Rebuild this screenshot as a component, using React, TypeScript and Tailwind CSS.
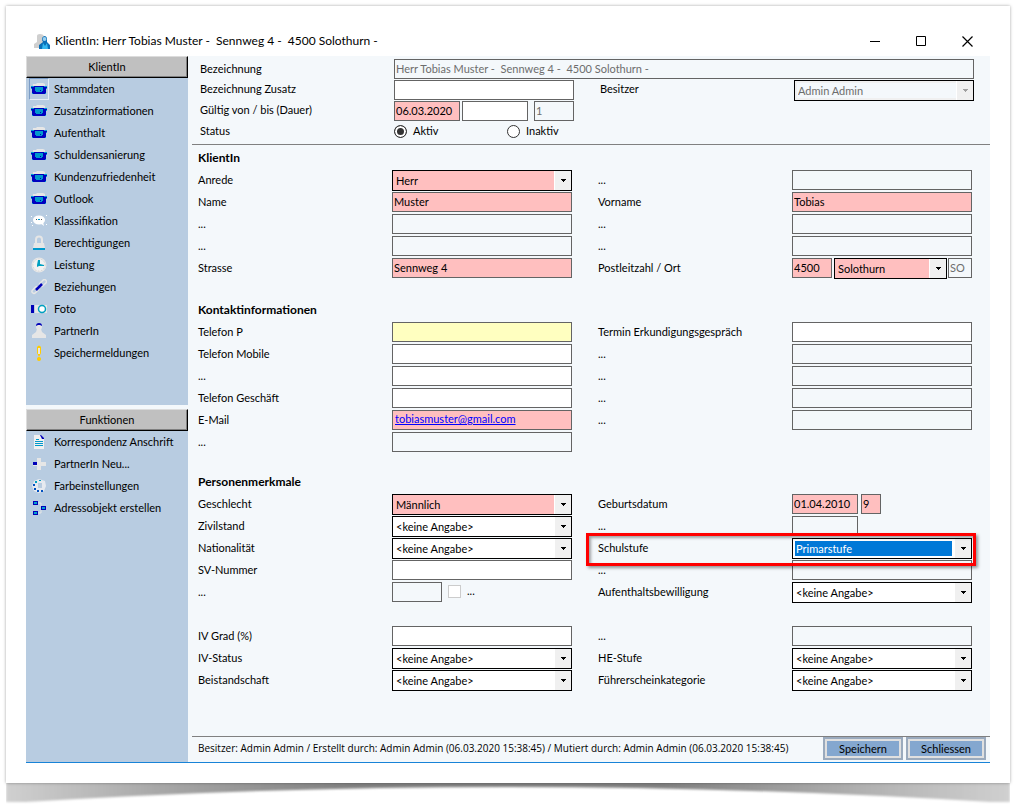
import { useId, useState } from 'react';
import type { ReactNode } from 'react';
import clsx from 'clsx';

type Tone = 'white' | 'required' | 'hint' | 'disabled' | 'selected';

const toneClass: Record<Tone, string> = {
  white: 'bg-white',
  required: 'bg-[#ffbfbf]',
  hint: 'bg-[#ffffc0]',
  disabled: 'bg-[#f4f8fb] text-[#6d6d6d]',
  selected: 'bg-[#0078d7] text-white'
};

function FolderIcon() {
  return (
    <>
      <path d="M2 4V3h3l1-1h6l2 1v2H2z" fill="#e6e6e6" />
      <path d="M0 5h16v3h-1v5H1V8H0z" fill="#0000c0" />
      <path d="M0 5h3v1H0zM13 5h3v1h-3zM0 7h1v1H0zM15 7h1v1h-1zM1 12h1v1H1zM14 12h1v1h-1z" fill="#00a0d0" />
      <path d="M4 6h8v5H4z" fill="#0099cc" />
      <path d="M4 10h1v1H4zM11 10h1v1h-1zM9 9h1v1H9z" fill="#0000c0" />
    </>
  );
}

const icons: Record<string, ReactNode> = {
  folder: <FolderIcon />,
  speech: (
    <>
      <ellipse cx="8" cy="7" rx="6" ry="4.5" fill="#fff" />
      <path d="M9 10l4 3-1-4z" fill="#fff" />
      <path d="M0 3h1v1H0zM0 9h1v1H0zM1 12h1v1H1zM15 2h1v1h-1zM15 11h1v1h-1z" fill="#fff" />
      <path d="M5 6h1v1H5zM10 6h1v1h-1z" fill="#555" />
      <path d="M7 6h2v1H7z" fill="#0099cc" />
    </>
  ),
  lock: (
    <>
      <path d="M5 8V4.500a3 3 0 0 1 6 0V8" fill="none" stroke="#e6e6e6" strokeWidth="2" />
      <path d="M3 8h10l1 5H2z" fill="#e6e6e6" />
      <path d="M2 13h12v2H2z" fill="#0099cc" />
    </>
  ),
  clock: (
    <>
      <circle cx="8" cy="8" r="7.500" fill="#e6e6e6" />
      <circle cx="8" cy="8" r="6" fill="#f2f2f2" stroke="#d2d2d2" strokeWidth="1" strokeDasharray="1 2" />
      <path d="M7 3h2v4l4 1v1H8L6 10V8z" fill="#00a0c0" />
    </>
  ),
  link: (
    <>
      <rect x="-1" y="9" width="8" height="4" rx="2" transform="rotate(-45 3 11) translate(1 1)" fill="none" stroke="#e6e6e6" strokeWidth="1.500" />
      <rect x="8" y="2" width="8" height="4" rx="2" transform="rotate(-45 12 4)" fill="none" stroke="#e6e6e6" strokeWidth="1.500" />
      <path d="M5 11l6-6" stroke="#0000b8" strokeWidth="2.500" />
    </>
  ),
  camera: (
    <>
      <path d="M0 4h3v8H0z" fill="#0000b8" />
      <path d="M4 4h12v8H4z" fill="#e6e6e6" />
      <circle cx="11" cy="8" r="3.500" fill="#fff" stroke="#00a0c0" strokeWidth="1.500" />
    </>
  ),
  person: (
    <>
      <circle cx="8" cy="4" r="3" fill="#e6e6e6" />
      <path d="M5 3q0-3 3-3t3 3L9 2H7z" fill="#0000b8" />
      <path d="M6 6h4l1 3 4 3v3H1v-3l4-3z" fill="#e6e6e6" />
    </>
  ),
  alert: (
    <>
      <path d="M6 2q2-3 4 0v6l-2 4-2-4z" fill="#fc0" />
      <path d="M8 3v6" stroke="#e6e6e6" strokeWidth="2" />
      <circle cx="8" cy="14" r="2" fill="#fc0" />
    </>
  ),
  letter: (
    <>
      <path d="M3 1h7l3 3v11H3z" fill="#f0f0f0" />
      <path d="M9 1h1l3 3v1h-2z" fill="#0000b8" />
      <path d="M5 5h3v1H5zM4 7h8v1H4zM4 9h8v1H4zM4 11h8v1H4z" fill="#0099cc" />
    </>
  ),
  plus: (
    <>
      <path d="M2 6h4V2h4v4h5v4h-5v4H6v-4H2z" fill="#e6e6e6" />
      <path d="M2 6h4v3H2z" fill="#0000b8" />
    </>
  ),
  palette: (
    <>
      <path d="M8 1l6 2 1 5-2 5-5 2-5-2-2-5 2-5z" fill="#e6eaf0" />
      <path d="M7 5h4v5H7z" fill="#b8cce1" />
      <path d="M2 6h2v2H2zM3 10h2v2H3zM6 12h2v2H6zM10 12h2v2h-2z" fill="#0050c0" />
      <path d="M4 3h2v2H4zM8 2h2v1H8z" fill="#00a0c0" />
    </>
  ),
  nodes: (
    <>
      <path d="M7 3h3v3M7 13h3v-3" fill="none" stroke="#e6e6e6" strokeWidth="1" />
      <path d="M2 1h5v4H2zM2 11h5v4H2zM10 6h5v4h-5z" fill="#0000b8" />
      <path d="M3 2h3v2H3zM3 12h3v2H3zM11 7h3v2h-3z" fill="#00a0d0" />
    </>
  )
};

const menuItems = [
  { label: 'Stammdaten', icon: 'folder' },
  { label: 'Zusatzinformationen', icon: 'folder' },
  { label: 'Aufenthalt', icon: 'folder' },
  { label: 'Schuldensanierung', icon: 'folder' },
  { label: 'Kundenzufriedenheit', icon: 'folder' },
  { label: 'Outlook', icon: 'folder' },
  { label: 'Klassifikation', icon: 'speech' },
  { label: 'Berechtigungen', icon: 'lock' },
  { label: 'Leistung', icon: 'clock' },
  { label: 'Beziehungen', icon: 'link' },
  { label: 'Foto', icon: 'camera' },
  { label: 'PartnerIn', icon: 'person' },
  { label: 'Speichermeldungen', icon: 'alert' }
];

const functionItems = [
  { label: 'Korrespondenz Anschrift', icon: 'letter' },
  { label: 'PartnerIn Neu...', icon: 'plus' },
  { label: 'Farbeinstellungen', icon: 'palette' },
  { label: 'Adressobjekt erstellen', icon: 'nodes' }
];

interface SidebarGroupProps {
  title: string;
  items: { label: string; icon: string }[];
  active?: string;
  onSelect?: (label: string) => void;
  className?: string;
}

function SidebarGroup({ title, items, active, onSelect, className }: SidebarGroupProps) {
  return (
    <div className={clsx('bg-[#b8cce1]', className)}>
      <h2 className="flex h-[22px] items-center justify-center border border-t-[#dcdcdc] border-r-black border-b-black border-l-[#dcdcdc] bg-[#c0c0c0] shadow-[inset_-1px_-1px_0_#808080]">
        {title}
      </h2>
      <ul>
        {items.map((item) => (
          <li key={item.label}>
            <button
              type="button"
              onClick={() => onSelect?.(item.label)}
              className="flex h-[22px] w-full items-center gap-[5px] pl-[3px] text-left"
            >
              <span
                className={clsx(
                  'flex h-[22px] w-5 items-center justify-center border',
                  item.label === active
                    ? 'border-t-[#7a9cc6] border-r-[#e6eef6] border-b-[#e6eef6] border-l-[#7a9cc6]'
                    : 'border-transparent'
                )}
              >
                <svg width="16" height="16" viewBox="0 0 16 16" className="shrink-0" aria-hidden="true">
                  {icons[item.icon]}
                </svg>
              </span>
              {item.label}
            </button>
          </li>
        ))}
      </ul>
    </div>
  );
}

interface TextBoxProps {
  id?: string;
  value?: string;
  tone?: Tone;
  label?: string;
  className?: string;
}

function TextBox({ id, value = '', tone = 'white', label, className = 'w-full' }: TextBoxProps) {
  return (
    <input
      id={id}
      type="text"
      defaultValue={value}
      disabled={tone === 'disabled'}
      aria-label={label}
      className={clsx('h-5 min-w-0 rounded-none border border-[#646464] px-px pb-[2px] outline-none', toneClass[tone], className)}
    />
  );
}

function ComboBox({ id, value = '<keine Angabe>', tone = 'white', label, className = 'w-full' }: TextBoxProps) {
  const disabled = tone === 'disabled';
  return (
    <div
      className={clsx(
        'relative flex h-[21px] border border-black',
        tone === 'required' ? 'bg-[#ffbfbf]' : disabled ? 'bg-[#f0f0f0]' : 'bg-white',
        (tone === 'selected' || disabled) && 'p-[2px]',
        tone === 'selected' && 'pr-[19px]',
        className
      )}
    >
      <select
        id={id}
        disabled={disabled}
        aria-label={label}
        className={clsx(
          'w-full min-w-0 appearance-none rounded-none opacity-100 outline-none',
          tone === 'selected' || disabled ? 'pl-px leading-[15px]' : 'pl-[3px]',
          toneClass[tone]
        )}
      >
        <option>{value}</option>
      </select>
      <span
        className={clsx(
          'pointer-events-none absolute inset-y-0 right-0 flex w-[17px] items-center justify-center border-l border-white bg-[#f0f0f0]',
          disabled ? 'text-[#a0a0a0]' : 'text-black'
        )}
      >
        <svg width="5" height="3" viewBox="0 0 5 3" shapeRendering="crispEdges" aria-hidden="true">
          <path d="M0 0h5v1H4v1H3v1H2V2H1V1H0z" fill="currentColor" />
        </svg>
      </span>
    </div>
  );
}

interface FieldProps {
  label?: string;
  marked?: boolean;
  children: (id: string) => ReactNode;
}

function Field({ label = '...', marked = false, children }: FieldProps) {
  const id = useId();
  return (
    <div className="relative flex h-[22px] items-center">
      <label htmlFor={id} className="w-[194px] shrink-0">
        {label}
      </label>
      <div className="flex h-full min-w-0 flex-1 items-start pt-px">{children(id)}</div>
      {marked && (
        <div className="pointer-events-none absolute -top-1 -right-1 -bottom-[7px] -left-3 z-10 border-[3px] border-[#f00] shadow-[2px_2px_3px_rgba(0,0,0,0.4),inset_2px_2px_3px_rgba(0,0,0,0.35)]" />
      )}
    </div>
  );
}

function TextField({ label, value, tone }: { label?: string; value?: string; tone?: Tone }) {
  return <Field label={label}>{(id) => <TextBox id={id} value={value} tone={tone} />}</Field>;
}

function ComboField({ label, value, tone, marked }: { label: string; value?: string; tone?: Tone; marked?: boolean }) {
  return (
    <Field label={label} marked={marked}>
      {(id) => <ComboBox id={id} value={value} tone={tone} />}
    </Field>
  );
}

function SectionTitle({ children }: { children: ReactNode }) {
  return <h3 className="flex h-[22px] items-center text-[12px] font-bold">{children}</h3>;
}

function TitleBar() {
  return (
    <header className="flex h-[30px] items-center bg-white pl-2">
      <svg width="17" height="17" viewBox="0 0 17 17" aria-hidden="true">
        <path d="M3 3q0-2 3-2t4 2v5l2 2v5H0v-4l3-2z" fill="#cfcfcf" />
        <path d="M8 5q3-4 5 0v4l3 3v4H5v-4l4-3-1-2z" fill="#0a6fb8" />
        <circle cx="10.500" cy="6" r="2" fill="#9ad0f0" />
        <path d="M9 10l2 3 2-3 1 6H8z" fill="#35b8f0" />
      </svg>
      <h1 className="flex-1 pl-1 text-[12px] whitespace-pre">
        {'KlientIn: Herr Tobias Muster -  Sennweg 4 -  4500 Solothurn -'}
      </h1>
      <div className="flex self-stretch">
        <button type="button" aria-label="Minimieren" className="flex w-[46px] items-center justify-center">
          <svg width="11" height="11" viewBox="0 0 11 11">
            <path d="M0 5.500h10" stroke="#000" />
          </svg>
        </button>
        <button type="button" aria-label="Maximieren" className="flex w-[46px] items-center justify-center">
          <svg width="11" height="11" viewBox="0 0 11 11">
            <path d="M.5.5h9v9h-9z" fill="none" stroke="#000" />
          </svg>
        </button>
        <button type="button" aria-label="Fenster schliessen" className="flex w-[46px] items-center justify-center">
          <svg width="11" height="11" viewBox="0 0 11 11">
            <path d="M.5.5l10 10M10.500.5l-10 10" stroke="#000" strokeWidth="1.200" />
          </svg>
        </button>
      </div>
    </header>
  );
}

function StatusRadio({ label, checked, onChange }: { label: string; checked: boolean; onChange: () => void }) {
  return (
    <label className="flex w-[113px] items-center gap-[6px]">
      <input
        type="radio"
        name="status"
        checked={checked}
        onChange={onChange}
        className="size-[13px] appearance-none rounded-full border border-[#333] bg-white checked:bg-[#333] checked:shadow-[inset_0_0_0_2px_white]"
      />
      {label}
    </label>
  );
}

function HeaderFields() {
  const id = useId();
  const [active, setActive] = useState(true);
  return (
    <div className="ml-1 border-b border-[#808080] pt-[3px] pr-4 pb-1 pl-2">
      <div className="flex h-[21px] items-start">
        <label htmlFor={`${id}-name`} className="w-[194px] shrink-0 pt-px">Bezeichnung</label>
        <TextBox id={`${id}-name`} value="Herr Tobias Muster -  Sennweg 4 -  4500 Solothurn -" tone="disabled" />
      </div>
      <div className="grid h-[21px] grid-cols-2 gap-x-[26px]">
        <div className="flex items-start">
          <label htmlFor={`${id}-extra`} className="w-[194px] shrink-0">Bezeichnung Zusatz</label>
          <TextBox id={`${id}-extra`} />
        </div>
        <div className="flex items-start">
          <label htmlFor={`${id}-owner`} className="w-[194px] shrink-0">Besitzer</label>
          <ComboBox id={`${id}-owner`} value="Admin Admin" tone="disabled" />
        </div>
      </div>
      <div className="flex h-[21px] items-start">
        <label htmlFor={`${id}-from`} className="w-[194px] shrink-0">Gültig von / bis (Dauer)</label>
        <div className="flex items-start">
          <TextBox id={`${id}-from`} value="06.03.2020" tone="required" className="w-[66px]" />
          <TextBox label="Gültig bis" className="ml-[2px] w-[66px]" />
          <TextBox label="Dauer" value="1" tone="disabled" className="ml-[6px] w-10" />
        </div>
      </div>
      <div className="flex h-[18px] items-center">
        <span className="w-[194px] shrink-0">Status</span>
        <StatusRadio label="Aktiv" checked={active} onChange={() => setActive(true)} />
        <StatusRadio label="Inaktiv" checked={!active} onChange={() => setActive(false)} />
      </div>
    </div>
  );
}

function ClientForm() {
  return (
    <form className="pt-[2px] pr-[18px] pb-[45px] pl-[10px]">
      <SectionTitle>KlientIn</SectionTitle>
      <div className="grid grid-cols-2 gap-x-[26px]">
        <ComboField label="Anrede" value="Herr" tone="required" />
        <TextField tone="disabled" />
        <TextField label="Name" value="Muster" tone="required" />
        <TextField label="Vorname" value="Tobias" tone="required" />
        <TextField tone="disabled" />
        <TextField tone="disabled" />
        <TextField tone="disabled" />
        <TextField tone="disabled" />
        <TextField label="Strasse" value="Sennweg 4" tone="required" />
        <Field label="Postleitzahl / Ort">
          {(id) => (
            <>
              <TextBox id={id} value="4500" tone="required" className="w-10 shrink-0" />
              <ComboBox label="Ort" value="Solothurn" tone="required" className="ml-[2px] flex-1" />
              <TextBox label="Kanton" value="SO" tone="disabled" className="ml-px w-6 shrink-0" />
            </>
          )}
        </Field>
      </div>

      <div className="mt-5">
        <SectionTitle>Kontaktinformationen</SectionTitle>
        <div className="grid grid-cols-2 gap-x-[26px]">
          <TextField label="Telefon P" tone="hint" />
          <TextField label="Termin Erkundigungsgespräch" />
          <TextField label="Telefon Mobile" />
          <TextField tone="disabled" />
          <TextField />
          <TextField tone="disabled" />
          <TextField label="Telefon Geschäft" />
          <TextField tone="disabled" />
          <Field label="E-Mail">
            {(id) => (
              <div className="h-5 w-full border border-[#646464] bg-[#ffbfbf] px-[2px] leading-4">
                <a id={id} href="mailto:tobiasmuster@gmail.com" className="text-[#00f] underline">
                  tobiasmuster@gmail.com
                </a>
              </div>
            )}
          </Field>
          <TextField tone="disabled" />
          <TextField tone="disabled" />
        </div>
      </div>

      <div className="mt-[18px]">
        <SectionTitle>Personenmerkmale</SectionTitle>
        <div className="grid grid-cols-2 gap-x-[26px]">
          <ComboField label="Geschlecht" value="Männlich" tone="required" />
          <Field label="Geburtsdatum">
            {(id) => (
              <>
                <TextBox id={id} value="01.04.2010" tone="required" className="w-[66px]" />
                <TextBox label="Alter" value="9" tone="required" className="ml-[3px] w-5" />
              </>
            )}
          </Field>
          <ComboField label="Zivilstand" />
          <Field>{(id) => <TextBox id={id} tone="disabled" className="w-[66px]" />}</Field>
          <ComboField label="Nationalität" />
          <ComboField label="Schulstufe" value="Primarstufe" tone="selected" marked />
          <TextField label="SV-Nummer" />
          <TextField tone="disabled" />
          <Field>
            {(id) => (
              <>
                <TextBox id={id} tone="disabled" className="w-[50px]" />
                <label className="ml-[6px] flex items-center gap-[6px]">
                  <input type="checkbox" disabled className="size-[13px] appearance-none border border-[#ccc] bg-white" />
                  ...
                </label>
              </>
            )}
          </Field>
          <ComboField label="Aufenthaltsbewilligung" />
        </div>
        <div className="mt-[22px] grid grid-cols-2 gap-x-[26px]">
          <TextField label="IV Grad (%)" />
          <TextField tone="disabled" />
          <ComboField label="IV-Status" />
          <ComboField label="HE-Stufe" />
          <ComboField label="Beistandschaft" />
          <ComboField label="Führerscheinkategorie" />
        </div>
      </div>
    </form>
  );
}

function FooterButton({ children }: { children: ReactNode }) {
  return (
    <button
      type="button"
      className="h-[23px] w-20 border-2 border-[#9aaabd] bg-[#84a7cf] shadow-[inset_0_0_0_2px_#e0e0e0]"
    >
      {children}
    </button>
  );
}

// Curled paper shadow under the card: deep at the corners, thin in the middle
function PaperShadow() {
  return (
    <svg className="block h-[29px] w-full" viewBox="0 0 1005 29" preserveAspectRatio="none" aria-hidden="true">
      <defs>
        <linearGradient id="curl">
          <stop offset="0" stopColor="#d0d0d0" />
          <stop offset="0.15" stopColor="#a8a8a8" />
          <stop offset="0.35" stopColor="#808080" />
          <stop offset="0.65" stopColor="#808080" />
          <stop offset="0.85" stopColor="#b0b0b0" />
          <stop offset="1" stopColor="#d0d0d0" />
        </linearGradient>
        <filter id="soft" x="-2%" y="-20%" width="104%" height="150%">
          <feGaussianBlur stdDeviation="1.2" />
        </filter>
      </defs>
      <path d="M0-6H1005V19H985Q740 4 502 4T20 19H0z" fill="url(#curl)" filter="url(#soft)" />
    </svg>
  );
}

export default function App() {
  const [page, setPage] = useState('Stammdaten');

  return (
    <div className="bg-white pt-[6px] pr-[14px] pl-[6px] font-[Lato,'Liberation_Sans',sans-serif] text-[11px] leading-[18px] text-black">
      <div className="relative bg-white px-5 pt-5 pb-5 shadow-[0_0_3px_rgba(0,0,0,0.35)]">
        <TitleBar />
        <div className="flex border-b border-[#1883d7] bg-[#f4f8fb]">
          <nav className="flex w-[162px] shrink-0 flex-col gap-1">
            <SidebarGroup title="KlientIn" items={menuItems} active={page} onSelect={setPage} className="pb-[41px]" />
            <SidebarGroup title="Funktionen" items={functionItems} className="flex-1" />
          </nav>
          <main className="min-w-0 flex-1">
            <HeaderFields />
            <ClientForm />
            <footer className="ml-1 flex items-start border-t border-[#808080] pr-1 pb-[2px] pl-[6px]">
              <p className="min-w-0 flex-1 pt-[2px] font-['Open_Sans',sans-serif] text-[10px] whitespace-nowrap">
                Besitzer: Admin Admin / Erstellt durch: Admin Admin (06.03.2020 15:38:45) / Mutiert durch: Admin Admin (06.03.2020 15:38:45)
              </p>
              <div className="flex gap-[3px]">
                <FooterButton>Speichern</FooterButton>
                <FooterButton>Schliessen</FooterButton>
              </div>
            </footer>
          </main>
        </div>
      </div>
      <PaperShadow />
    </div>
  );
}
